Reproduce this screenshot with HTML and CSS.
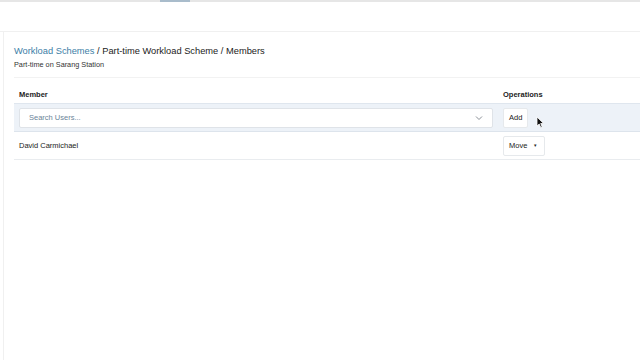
FILE: index.html
```html
<!DOCTYPE html>
<html lang="en">
<head>
  <meta charset="UTF-8" />
  <title>Members - Part-time Workload Scheme</title>
  <link rel="stylesheet" href="styles.css">
</head>
<body>
  <div class="topbar">
    <div class="tab-marker"></div>
  </div>
  <div class="page">
    <div class="sidebar"></div>
    <div class="main">
      <div class="title">
        <a class="crumb" href="#">Workload Schemes</a> / Part-time Workload Scheme / Members
      </div>
      <div class="subtitle">Part-time on Sarang Station</div>

      <div class="table">
        <div class="row head">
          <div class="col-member">Member</div>
          <div class="col-ops">Operations</div>
        </div>
        <div class="row add-row">
          <div class="col-member">
            <div class="search">
              <span class="placeholder">Search Users...</span>
              <svg class="chevron" width="8" height="6" viewBox="0 0 8 6">
                <path d="M1 1.5 L4 4.5 L7 1.5" stroke="#8a8f96" stroke-width="1" fill="none"/>
              </svg>
            </div>
          </div>
          <div class="col-ops">
            <button class="btn">Add</button>
            <svg class="cursor" width="9" height="13" viewBox="0 0 9 13">
              <path d="M1 1 L1 10 L3.2 8 L4.8 11.6 L6.2 11 L4.7 7.5 L7.6 7.5 Z" fill="#111" stroke="#fff" stroke-width="0.8"/>
            </svg>
          </div>
        </div>
        <div class="row member-row">
          <div class="col-member">David Carmichael</div>
          <div class="col-ops">
            <button class="btn">Move <span class="caret">&#9662;</span></button>
          </div>
        </div>
      </div>
    </div>
  </div>
</body>
</html>
```

FILE: styles.css
```css
body {
  margin: 0;
  font-family: "Liberation Sans", Arial, sans-serif;
  background: #fff;
  color: #222;
  width: 640px;
  height: 360px;
  overflow: hidden;
}
.topbar {
  height: 29px;
  border-top: 2px solid #e6e6e6;
  border-bottom: 1px solid #f0f0f0;
  position: relative;
}
.tab-marker {
  position: absolute;
  top: -2px;
  left: 160px;
  width: 30px;
  height: 2px;
  background: #a9bccb;
}
.page {
  display: flex;
  height: 328px;
}
.sidebar {
  width: 3px;
  border-right: 1px solid #f0f0f0;
}
.main {
  flex: 1;
  padding: 12px 0 0 10px;
}
.title {
  font-size: 9.3px;
  color: #222;
  line-height: 14px;
}
.crumb {
  color: #3d7ea6;
  text-decoration: none;
}
.subtitle {
  font-size: 7.3px;
  color: #333;
  margin-top: 2px;
  line-height: 10px;
}
.table {
  margin-top: 7px;
  border-top: 1px solid #f2f2f2;
}
.row {
  display: flex;
  align-items: center;
  border-bottom: 1px solid #e9ecef;
  box-sizing: border-box;
}
.col-member {
  width: 484px;
  padding-left: 5px;
  font-size: 7.5px;
}
.col-ops {
  flex: 1;
  font-size: 7.5px;
  position: relative;
}
.head {
  height: 26px;
  padding-top: 7px;
  font-weight: bold;
  border-bottom: 1px solid #dfe6ee;
}
.add-row {
  height: 28px;
  background: #edf2f8;
  border-bottom: 1px solid #dde4ec;
}
.search {
  width: 474px;
  height: 20px;
  background: #fff;
  border: 1px solid #dfe3e8;
  border-radius: 2px;
  display: flex;
  align-items: center;
  justify-content: space-between;
  padding: 0 9px;
  box-sizing: border-box;
}
.placeholder {
  color: #6b8599;
  font-size: 7.5px;
}
.member-row {
  height: 28px;
}
.btn {
  font-family: inherit;
  font-size: 7.5px;
  color: #222;
  background: #fff;
  border: 1px solid #e6e9ec;
  border-radius: 2px;
  height: 20px;
  padding: 0 5px;
  cursor: pointer;
}
.member-row .btn {
  padding: 0 7px 0 5px;
}
.caret {
  font-size: 5px;
  margin-left: 5px;
  vertical-align: 1px;
}
.cursor {
  position: absolute;
  left: 33px;
  top: 8px;
}
```
